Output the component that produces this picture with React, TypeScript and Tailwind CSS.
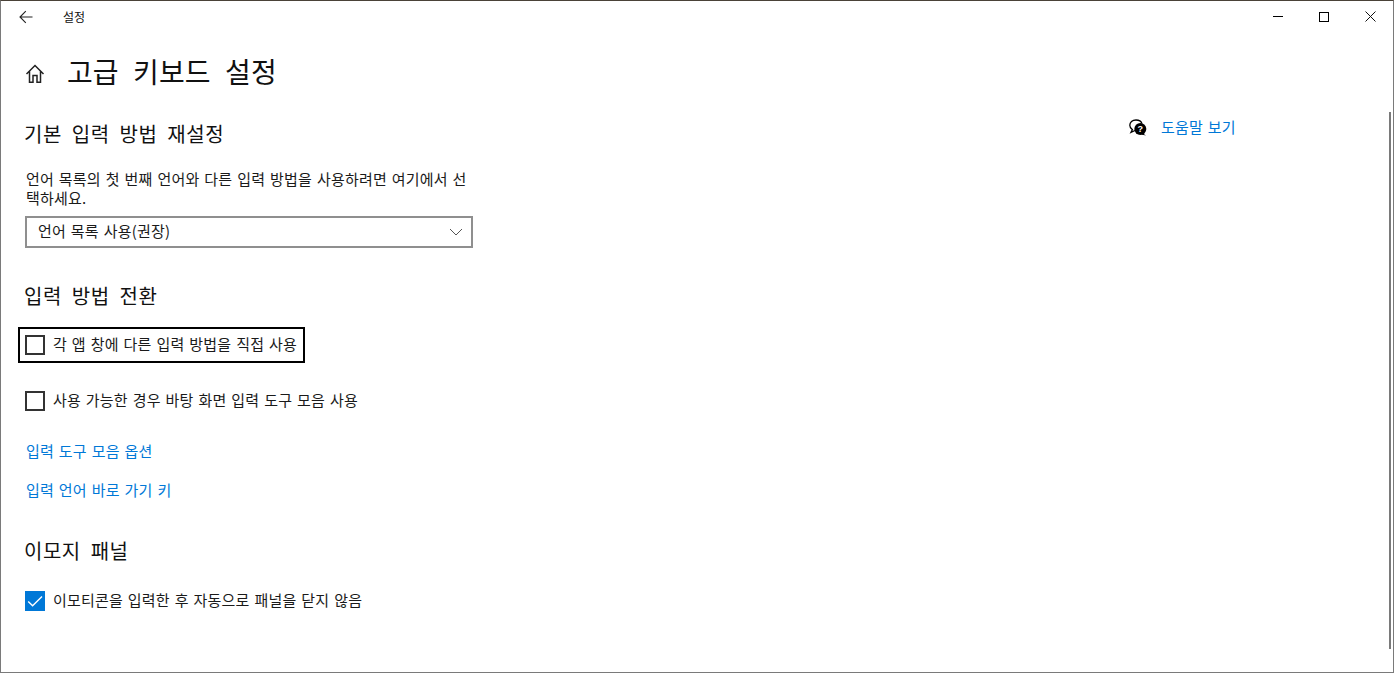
const FONT = "font-['Noto_Sans_CJK_KR','Noto_Sans',sans-serif]";
const BODY = "text-[15px] leading-[20px] tracking-[0.2px] [word-spacing:1.3px]";
const H2 = "ml-[23px] text-[20px] font-normal leading-[28px] text-[#111] tracking-[0.5px] [word-spacing:5px]";

function Check({ label, checked, focused, className }: { label: string; checked?: boolean; focused?: boolean; className?: string }) {
  return (
    <div className={`flex h-[36px] w-fit items-center gap-[8px] border-2 pl-[5px] pr-[6px] ${focused ? "border-black" : "border-transparent"} ${className ?? ""}`}>
      {checked ? (
        <div className="flex h-5 w-5 items-center justify-center bg-[#0078d7]">
          <svg width="20" height="20" viewBox="0 0 20 20" fill="none" stroke="white" strokeWidth="1.4">
            <path d="M3.2 10.4 L7.6 14.8 L17 5.4" />
          </svg>
        </div>
      ) : (
        <div className="h-5 w-5 border-2 border-[#333333]" />
      )}
      <span className={`${BODY} pb-[2px] text-[#1a1a1a]`}>{label}</span>
    </div>
  );
}

export default function App() {
  return (
    <div className={`relative flex h-[673px] w-[1394px] flex-col overflow-hidden border-x border-b border-t border-x-[#7a7a7a] border-b-[#7a7a7a] border-t-[#4a4238] bg-white ${FONT}`}>
      <header className="flex h-[31px] shrink-0 items-center">
        <div className="flex w-[62px] justify-center pr-[13px]">
          <svg width="14" height="14" viewBox="0 0 14 14" fill="none" stroke="#222" strokeWidth="1.1">
            <path d="M13.5 7 H1 M6.8 1.2 L1 7 L6.8 12.8" />
          </svg>
        </div>
        <span className="text-[12px] leading-[16px] text-[#111]">설정</span>
        <div className="ml-auto flex items-center">
          <div className="flex h-[31px] w-[46px] items-center justify-center">
            <div className="h-px w-[10px] bg-black" />
          </div>
          <div className="flex h-[31px] w-[46px] items-center justify-center">
            <div className="h-[10px] w-[10px] border border-black" />
          </div>
          <div className="flex h-[31px] w-[46px] items-center justify-center">
            <svg width="11" height="11" viewBox="0 0 11 11" fill="none" stroke="#111" strokeWidth="1">
              <path d="M.5 .5 L10.5 10.5 M10.5 .5 L.5 10.5" />
            </svg>
          </div>
        </div>
      </header>

      <main className="flex flex-1">
        <div className="flex-1">
          <div className="mt-[19px] flex h-[40px] items-center">
            <svg className="ml-[24px] mt-[5px]" width="20" height="20" viewBox="0 0 20 20" fill="none" stroke="#222" strokeWidth="1.5">
              <path d="M1.5 10 L10 1.5 L18.5 10 M4.5 7.5 V18.2 H8 V11.5 H12 V18.2 H15.5 V7.5" />
            </svg>
            <h1 className="ml-[22px] text-[28px] font-normal leading-[40px] text-[#111] tracking-[0.1px] [word-spacing:8px]">고급 키보드 설정</h1>
          </div>

          <h2 className={`${H2} mt-[29px]`}>기본 입력 방법 재설정</h2>
          <p className={`ml-[25px] mt-[21px] w-[446px] ${BODY} !leading-[19px] text-[#1a1a1a]`}>
            언어 목록의 첫 번째 언어와 다른 입력 방법을 사용하려면 여기에서 선택하세요.
          </p>
          <div className="ml-[24px] mt-[9px] flex h-8 w-[448px] items-center justify-between border-2 border-[#8f8f8f] pl-[11px] pr-[8px]">
            <span className={`${BODY} pb-[2px] text-[#1a1a1a]`}>언어 목록 사용(권장)</span>
            <svg width="14" height="8" viewBox="0 0 14 8" fill="none" stroke="#555" strokeWidth="1">
              <path d="M1 1 L7 7 L13 1" />
            </svg>
          </div>

          <h2 className={`${H2} mt-[34px]`}>입력 방법 전환</h2>
          <Check className="ml-[17px] mt-[17px]" label="각 앱 창에 다른 입력 방법을 직접 사용" focused />
          <Check className="ml-[17px] mt-[20px]" label="사용 가능한 경우 바탕 화면 입력 도구 모음 사용" />

          <p className={`ml-[25px] mt-[22px] ${BODY} text-[#0078d7]`}>입력 도구 모음 옵션</p>
          <p className={`ml-[25px] mt-[19px] ${BODY} text-[#0078d7]`}>입력 언어 바로 가기 키</p>

          <h2 className={`${H2} mt-[37px]`}>이모지 패널</h2>
          <Check className="ml-[17px] mt-[18px]" label="이모티콘을 입력한 후 자동으로 패널을 닫지 않음" checked />
        </div>

        <aside className="w-[264px] shrink-0 pt-[85px]">
          <div className="flex items-center gap-[14px]">
            <svg width="18" height="17" viewBox="0 0 18 17">
              <path d="M7 1 C3.2 1 .8 3.4 .8 6.3 C.8 8.2 1.8 9.7 3.4 10.6 L2 13.4 L6 11.5" fill="none" stroke="#000" strokeWidth="1.3" />
              <path d="M7 1 C10 1 12.3 2.5 13 4.6" fill="none" stroke="#000" strokeWidth="1.3" />
              <circle cx="11.3" cy="10" r="6" fill="#000" />
              <path d="M14 14.5 L17 16.5 L12 15.5 Z" fill="#000" />
              <text x="11.3" y="13" textAnchor="middle" fontSize="9" fontWeight="700" fill="#fff" fontFamily="Liberation Sans">?</text>
            </svg>
            <span className={`${BODY} text-[#0078d7]`}>도움말 보기</span>
          </div>
        </aside>
      </main>

      <div className="absolute right-[2px] top-[111px] h-[537px] w-[2px] bg-[#7a7a7a]" />
    </div>
  );
}
